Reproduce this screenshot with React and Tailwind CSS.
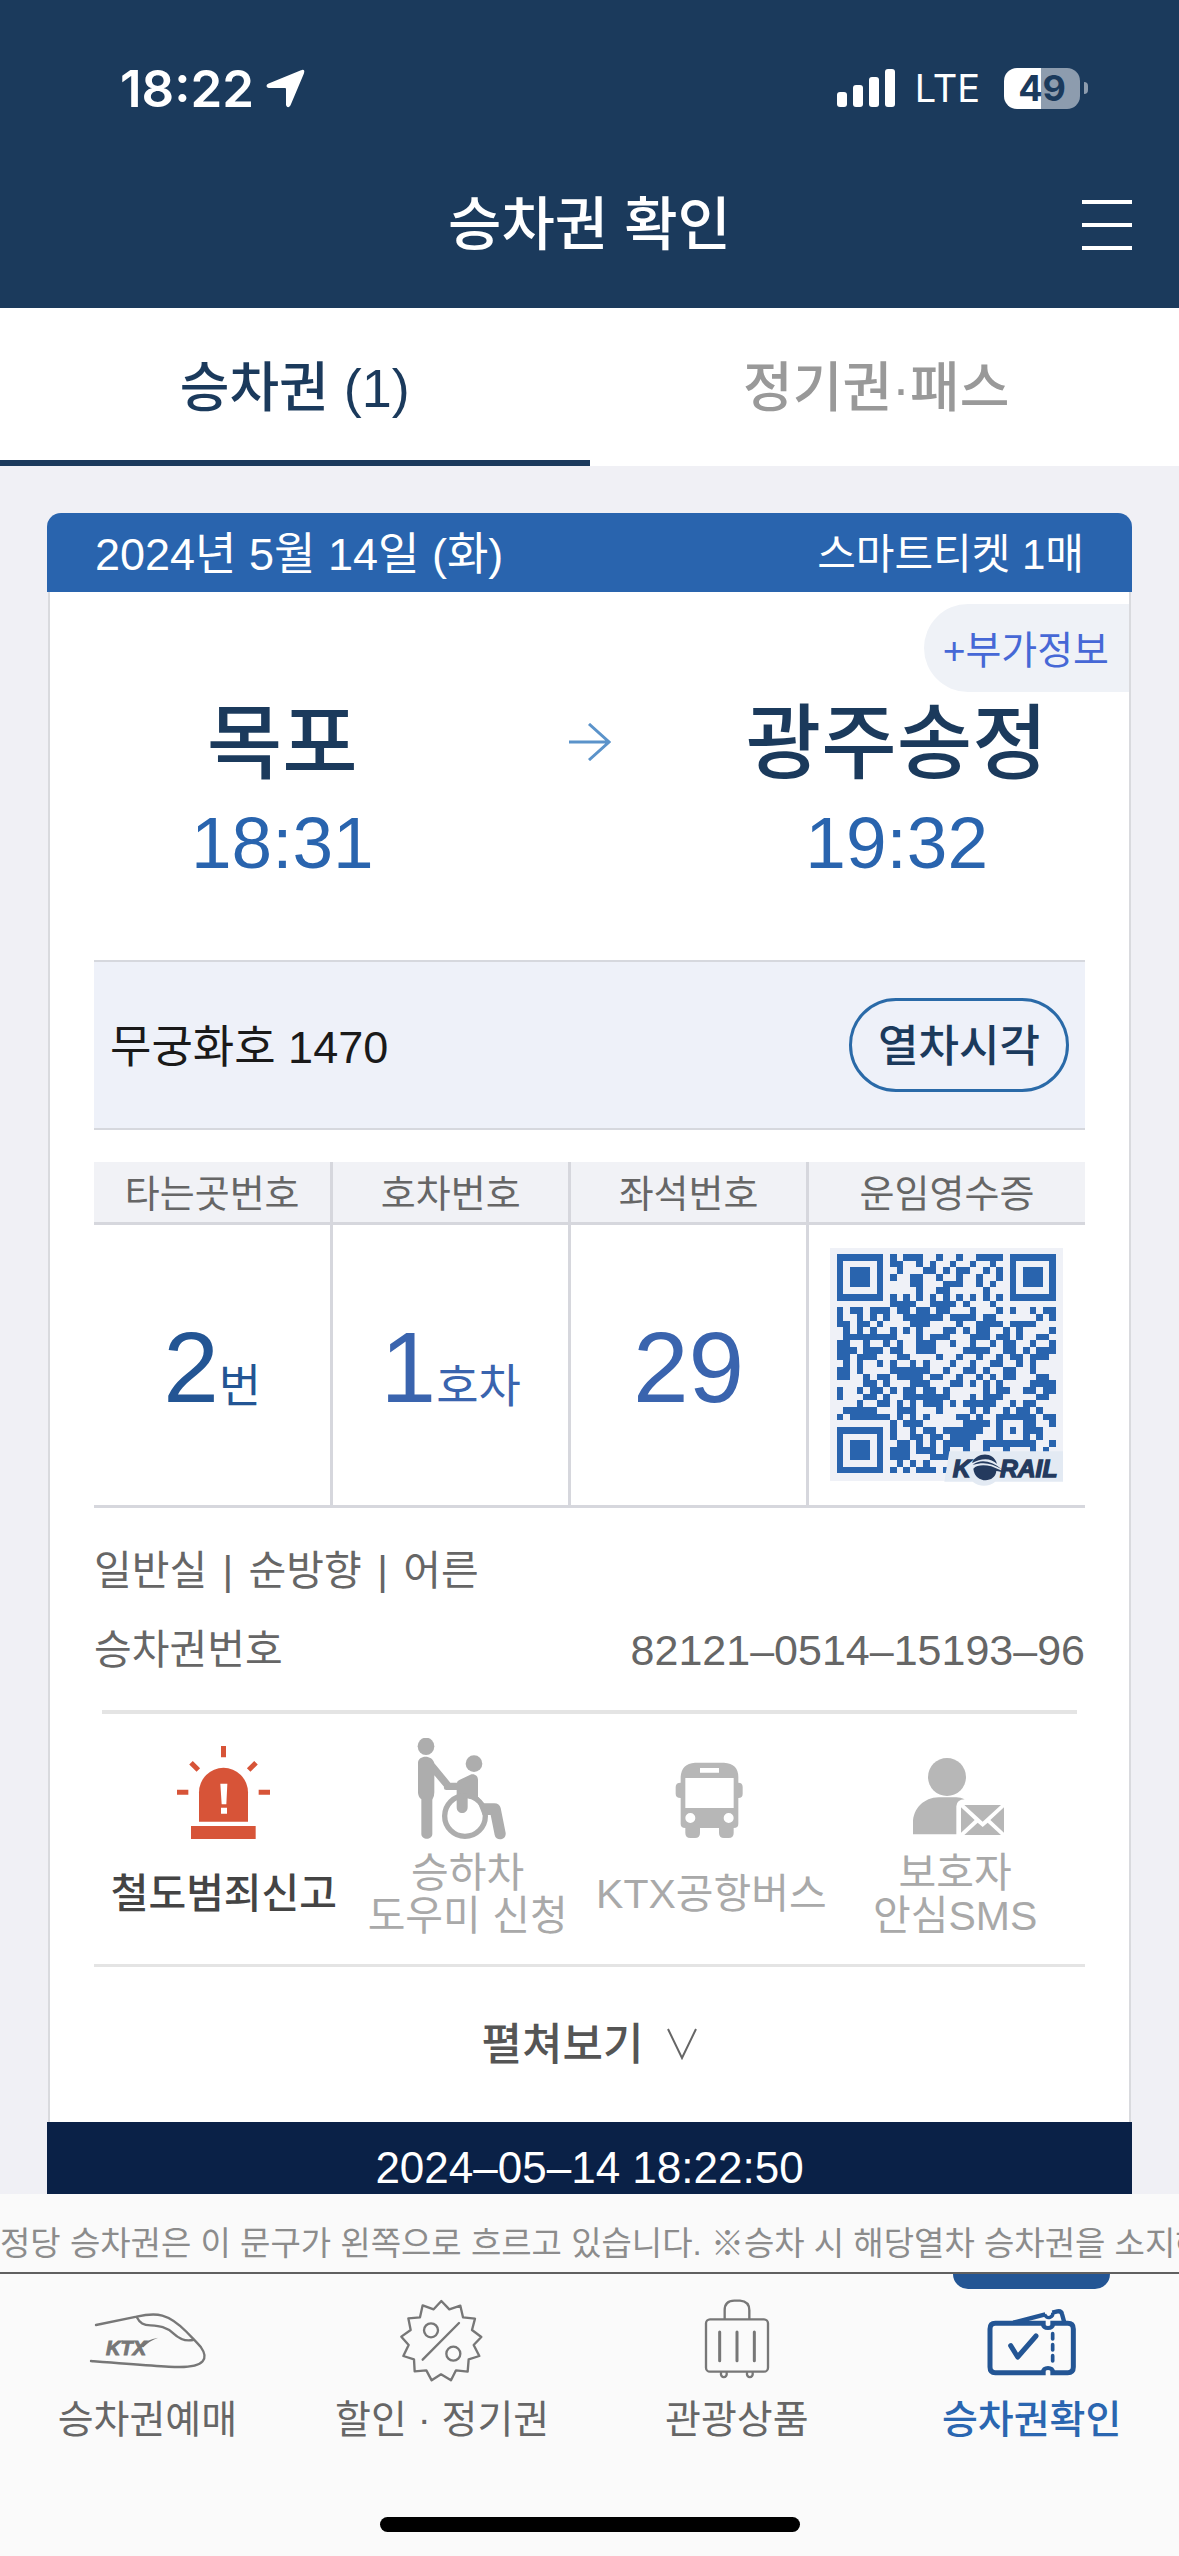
import React from "react";

const QR_ROWS = [
  "0-6 8 10-12 15 18 21-24 26-32",
  "0 6 8-9 12 14 17 20 23 26 32",
  "0 2-4 6 9 13-14 16 18-19 22 24 26 28-30 32",
  "0 2-4 6 8 11-12 15 18 21 24 26 28-30 32",
  "0 2-4 6 11-12 16-18 21 23 26 28-30 32",
  "0 6 12 15-16 22 26 32",
  "0-6 8 10 12 14 16 18 20 22 24 26-32",
  "8-11 14-17 19 23",
  "0 2-3 5-7 9-10 12-13 15-16 20 24 26 29 31-32",
  "0 3 5 7 10-15 17-20 22-23 30 32",
  "0-1 3-4 6 11-13 18 21-24 26-29",
  "1 3 5 8 10 12 16-17 19 21-22 25 27 32",
  "1-8 12 14-16 20-22 24-25 27 30-31",
  "0-1 4 7 9 12-14 17 20 23 25-26 29 32",
  "0-2 4-6 8-9 12-14 19-22 25-26 28 30-32",
  "0-1 3-5 9-10 15 18 21 24 26-27 29-31",
  "1 3 6 8 11 13 17 20 23-24 27 29",
  "0-1 3 8-13 16 19-20 22 25-26 29",
  "0-1 4 6-7 9-12 14-15 18 21 23 25-26 30-31",
  "4-5 7 11-13 17-18 20 22 24 29-32",
  "0 3 5-6 8 10-11 13-14 16 22 24-25 28-29 31-32",
  "0 4-5 7 10-16 20 22-24 30-31",
  "3 6-7 9 11 13-15 17 19-23 26 28-29",
  "1-5 9-11 15 20 22 25 27-28 30",
  "0 2-7 9 11 13 18-19 21 24-29 31-32",
  "8 10-12 19-22 24 28-29 32",
  "0-6 8 11 13-14 16-21 24 26 28-30",
  "0 6 8 11-12 14-15 17-20 24 28 30",
  "0 2-4 6 9-10 12 14 16-19 22-29 32",
  "0 2-4 6 8-10 12-14 16 19 22 25 29 31",
  "0 2-4 6 8-10 14-16",
  "0 6 9 11 13",
  "0-6 8 10 12-14 16",
];

const QR_PATH = QR_ROWS.map((row, y) =>
  row
    .split(" ")
    .map((run) => {
      const [a, b = a] = run.split("-").map(Number);
      return `M${a} ${y}h${b - a + 1}v1h-${b - a + 1}z`;
    })
    .join("")
).join("");

function QrCode() {
  return (
    <svg viewBox="30 30 699 699" className="mx-auto block w-[233px] overflow-visible" role="img" aria-label="운임영수증 QR">
      <rect x="30" y="30" width="699" height="699" fill="#eff1f7" />
      <path d={QR_PATH} fill="#2964ae" shapeRendering="crispEdges" transform="translate(50 48) scale(19.95)" />
      <path d="M388 640H729V731H526A53 53 0 0 1 458 731H373Z" fill="#e3eaf3" />
      <g fill="#243a5e">
        <g fontSize="74" fontWeight="700" fontStyle="italic" fontFamily="Liberation Sans" stroke="#243a5e" strokeWidth="4">
          <text x="398" y="717">K</text>
          <text x="540" y="717">RAIL</text>
        </g>
        <path d="M460 692C470 680 494 680 514 685L560 704C545 702 535 700 529 699C526 736 465 738 460 692Z" />
        <path d="M456 675C468 644 520 638 531 678C513 659 484 660 456 675Z" />
        <path d="M458 681C480 662 515 668 545 694C515 675 490 671 458 681Z" />
      </g>
    </svg>
  );
}

function SirenIcon() {
  return (
    <svg viewBox="249 57 360 306" className="h-[102px] w-[120px]" aria-hidden="true">
      <g fill="#d75438">
        <path d="M354 308V220a73 73 0 0 1 147 0V308Z" />
        <rect x="330" y="321" width="194" height="39" />
      </g>
      <path d="M427.500 81V115M288 220H322M533 220H567M330 131L352 153M525 131L503 153" stroke="#d75438" strokeWidth="15" />
      <path d="M418 194H439L436 256H422ZM420 266H438V284H420Z" fill="#fff" />
    </svg>
  );
}

function WheelchairIcon() {
  return (
    <svg viewBox="981 57 360 306" className="h-[102px] w-[120px]" aria-hidden="true">
      <g fill="#adadad">
        <ellipse cx="1035" cy="82" rx="25" ry="26" />
        <circle cx="1179" cy="134" r="25" />
        <path d="M1011 132C1011 108 1054 106 1060 133L1108 191H1128Q1128 187 1135 183L1168 167C1180 163 1191 170 1191 183V233L1208 253H1238Q1255 252 1259 267L1274 342C1276 364 1245 368 1241 348L1229 288H1205L1190 250Q1180 240 1160 237V264C1160 288 1127 288 1127 264V213H1096Q1087 213 1089 203L1060 169V220Q1060 234 1054 242V344C1054 364 1021 364 1021 344V241Q1011 234 1011 220Z" />
      </g>
      <circle cx="1152" cy="291" r="61" fill="none" stroke="#adadad" strokeWidth="16" />
    </svg>
  );
}

function BusIcon() {
  return (
    <svg viewBox="156 57 360 306" className="h-[102px] w-[120px]" aria-hidden="true">
      <path
        fill="#b7b7b7"
        fillRule="evenodd"
        d="M288 131H375Q418 134 418 174V191Q431 191 431 204V224Q431 237 418 237V314Q418 327 404 327V342Q404 357 389 357H375Q360 357 360 342V327H303V342Q303 357 288 357H274Q259 357 259 342V327Q245 327 245 314V237Q230 237 230 224V204Q230 191 245 191V174Q247 134 288 131ZM303 147V161H360V147ZM259 177V267H404V177ZM259 297a15 15 0 1 0 30 0a15 15 0 1 0 -30 0ZM374 297a15 15 0 1 0 30 0a15 15 0 1 0 -30 0Z"
      />
    </svg>
  );
}

function GuardianIcon() {
  return (
    <svg viewBox="888 57 360 306" className="h-[102px] w-[120px]" aria-hidden="true">
      <g fill="#b7b7b7">
        <circle cx="1044" cy="174" r="57" />
        <path d="M942 346V312C942 268 975 236 1019 235H1072Q1085 235 1097 241Q1073 242 1072 262V346Z" />
        <path d="M1096 258H1206L1151 308ZM1086 265L1127 303L1086 341ZM1215 265V341L1174 303ZM1096 348L1136 311L1151 324L1166 311L1206 348Z" />
      </g>
    </svg>
  );
}

function TrainIcon() {
  return (
    <svg viewBox="126 108 390 270" className="h-[90px] w-[130px]" aria-hidden="true">
      <g fill="none" stroke="#777" strokeWidth="7" strokeLinecap="round" strokeLinejoin="round">
        <path d="M168 195L290 170C350 156 385 160 440 216C455 232 470 246 483 262C505 293 497 322 415 321C380 321 330 317 153 303" />
        <path d="M290 171C300 190 310 196 332 196C360 198 378 200 400 220C418 237 434 245 459 240" />
      </g>
      <text x="198" y="285" fontSize="60" fontWeight="700" fontStyle="italic" fontFamily="Liberation Sans" fill="#777" stroke="#777" strokeWidth="3">KTX</text>
      <path d="M300 258Q320 238 355 233Q328 242 310 262Z" fill="#777" />
    </svg>
  );
}

function DiscountIcon() {
  return (
    <svg viewBox="1011 108 390 270" className="h-[90px] w-[130px]" aria-hidden="true">
      <g fill="none" stroke="#777" strokeWidth="7" strokeLinecap="round" strokeLinejoin="round">
        <path d="M1204 123L1228 148L1261 137L1269 172L1305 176L1296 210L1324 231L1301 255L1318 288L1286 298L1283 335L1248 331L1233 361L1203 343L1175 361L1159 331L1124 334L1122 298L1090 288L1106 255L1084 230L1112 210L1105 175L1140 172L1148 136L1181 148Z" />
        <path d="M1257 189L1148 299" />
        <circle cx="1173" cy="211" r="21" />
        <circle cx="1240" cy="281" r="21" />
      </g>
    </svg>
  );
}

function SuitcaseIcon() {
  return (
    <svg viewBox="96 108 390 270" className="h-[90px] w-[130px]" aria-hidden="true">
      <g fill="none" stroke="#777" strokeWidth="7" strokeLinecap="round">
        <rect x="198" y="178" width="186" height="157" rx="12" />
        <path d="M254 176V151Q254 122 283 122H300Q328 124 328 151V176" />
        <path d="M239 216V302M291 216V302M343 216V302" strokeWidth="9" />
        <path d="M243 338C240 356 263 356 260 338M321 338C318 356 341 356 338 338" />
      </g>
    </svg>
  );
}

function TicketIcon() {
  return (
    <svg viewBox="981 108 390 270" className="h-[90px] w-[130px]" aria-hidden="true">
      <g fill="none" stroke="#235594" strokeWidth="15">
        <path d="M1217 190H1066Q1050 190 1050 207V321Q1050 338 1066 338H1217" />
        <path d="M1231 190H1283Q1300 190 1300 207V321Q1300 338 1283 338H1231" />
        <path d="M1208 191Q1210 204 1224 204Q1238 204 1240 191M1208 337Q1210 324 1224 324Q1238 324 1240 337" strokeWidth="12" />
        <path d="M1120 188L1216 163M1237 158L1252 154Q1264 152 1266 162L1273 188" strokeWidth="13" />
        <path d="M1214 163Q1220 176 1230 172Q1241 168 1238 157" strokeWidth="10" />
        <path d="M1112 257L1133 291L1188 228" strokeLinecap="round" strokeLinejoin="round" />
        <path d="M1238 221V237M1238 254V270M1238 287V303" strokeWidth="11" strokeLinecap="round" />
      </g>
    </svg>
  );
}

function StatusBar() {
  return (
    <div className="flex items-center justify-between pt-[58px] pr-[91px] pb-6 pl-[120px]">
      <div className="flex h-[60px] items-center gap-3">
        <span className="font-['Inter'] text-[51px] leading-none font-semibold">18:22</span>
        <svg viewBox="0 0 39 39" className="size-[39px]" aria-hidden="true">
          <path d="M36 2Q38 1 37 4L23.500 36Q22 38.500 21 36V20Q21 18 19 18H3Q0 17 3 15.500Z" fill="#fff" stroke="#fff" strokeWidth="2" strokeLinejoin="round" />
        </svg>
      </div>
      <div className="flex h-[60px] items-center">
        <svg viewBox="0 0 58 38" className="h-[38px] w-[58px]" fill="#fff" aria-hidden="true">
          <rect x="0" y="23" width="10" height="15" rx="3" />
          <rect x="16" y="16" width="10" height="22" rx="3" />
          <rect x="32" y="8" width="10" height="30" rx="3" />
          <rect x="48" y="0" width="10" height="38" rx="3" />
        </svg>
        <span className="ml-5 font-['Inter'] text-[38px] leading-none">LTE</span>
        <span className="ml-6 flex h-[41px] w-[76px] items-center justify-center rounded-[13px] bg-linear-to-r from-white from-49% to-[#8d9cae] to-49% font-['Inter'] text-[36px] leading-none font-bold text-[#1b3a5c]">
          49
        </span>
        <span className="ml-1 h-3 w-1 rounded-r-full bg-[#8d9cae]" />
      </div>
    </div>
  );
}

const SERVICES = [
  { Icon: SirenIcon, lines: ["철도범죄신고"], tone: "font-medium text-[#444]" },
  { Icon: WheelchairIcon, lines: ["승하차", "도우미 신청"], tone: "text-[#a9a9a9]" },
  { Icon: BusIcon, lines: ["KTX공항버스"], tone: "text-[#a9a9a9]" },
  { Icon: GuardianIcon, lines: ["보호자", "안심SMS"], tone: "text-[#a9a9a9]" },
];

const NAV = [
  { Icon: TrainIcon, label: "승차권예매" },
  { Icon: DiscountIcon, label: "할인 · 정기권" },
  { Icon: SuitcaseIcon, label: "관광상품" },
  { Icon: TicketIcon, label: "승차권확인", active: true },
];

function Station({ name, time }) {
  return (
    <div className="w-[38%] text-center">
      <p className="text-[82px] leading-[104px] font-medium text-[#1b3a5c]">{name}</p>
      <p className="text-[73px] leading-[94px] text-[#2964ae]">{time}</p>
    </div>
  );
}

function TicketCard() {
  return (
    <section className="mx-[47px]">
      <div className="flex h-[79px] items-center justify-between rounded-t-[14px] bg-[#2964ae] px-12 pt-1 text-white">
        <h2 className="text-[45px] leading-none">2024년 5월 14일 (화)</h2>
        <p className="text-[42px] leading-none">스마트티켓 1매</p>
      </div>
      <div className="mx-px border-x-2 border-[#d9dade] bg-white pt-3">
        <button className="ml-auto block h-[88px] rounded-l-full bg-[#eff2f7] pt-1 pr-5 pl-[19px] text-[39px] leading-none text-[#4668d6]">
          +부가정보
        </button>
        <div className="mx-11">
          <div className="flex justify-between pb-[70px]">
            <Station name="목포" time="18:31" />
            <svg viewBox="0 0 42 38" className="mt-[31px] h-[38px] w-[42px]" fill="none" stroke="#5b93ca" strokeWidth="3" aria-hidden="true">
              <path d="M0 19H40M20 1L40 19L20 37" />
            </svg>
            <Station name="광주송정" time="19:32" />
          </div>
          <div className="flex items-center justify-between border-y-2 border-[#d6d8de] bg-[#eef1f9] py-9 pr-4 pl-4">
            <p className="pt-1 text-[45px] leading-none text-[#1a1a1a]">무궁화호 1470</p>
            <button className="h-[94px] rounded-full border-3 border-[#2a6aa8] px-[26px] pt-1 text-[44px] leading-none font-medium text-[#1b3a5c]">
              열차시각
            </button>
          </div>
          <table className="mt-8 w-full table-fixed border-collapse text-center">
            <thead>
              <tr className="h-[61px] border-b-3 border-[#d6d7dd] bg-[#f1f2f6] text-[38px] leading-none text-[#666]">
                <th className="w-[24%] border-r-3 border-[#d6d7dd] p-0 pt-1 font-normal">타는곳번호</th>
                <th className="w-[24%] border-r-3 border-[#d6d7dd] p-0 pt-1 font-normal">호차번호</th>
                <th className="w-[24%] border-r-3 border-[#d6d7dd] p-0 pt-1 font-normal">좌석번호</th>
                <th className="w-[28%] p-0 pt-1 font-normal">운임영수증</th>
              </tr>
            </thead>
            <tbody>
              <tr className="h-[283px] border-b-3 border-[#d6d7dd] text-[100px] leading-none text-[#3a64ae]">
                <td className="border-r-3 border-[#d6d7dd] p-0 pt-1 text-[#235594]">
                  2<span className="text-[46px]">번</span>
                </td>
                <td className="border-r-3 border-[#d6d7dd] p-0 pt-1">
                  1<span className="text-[46px]">호차</span>
                </td>
                <td className="border-r-3 border-[#d6d7dd] p-0 pt-1">29</td>
                <td className="p-0">
                  <QrCode />
                </td>
              </tr>
            </tbody>
          </table>
          <div className="mt-6 text-[41px] leading-[79px] text-[#666]">
            <p>
              일반실 <span className="mx-1">|</span> 순방향 <span className="mx-1">|</span> 어른
            </p>
            <p className="flex justify-between">
              <span>승차권번호</span>
              <span className="text-[43px]">82121–0514–15193–96</span>
            </p>
          </div>
          <div className="mx-2 mt-5 grid grid-cols-4 border-t-4 border-[#e4e4e4] pt-6 pb-[26px]">
            {SERVICES.map(({ Icon, lines, tone }) => (
              <button key={lines[0]} className={`flex flex-col items-center ${tone}`}>
                <Icon />
                <span className="mt-3 flex h-[86px] flex-col justify-center text-[41px] leading-[43px] whitespace-nowrap">
                  {lines.map((line) => (
                    <span key={line}>{line}</span>
                  ))}
                </span>
              </button>
            ))}
          </div>
          <button className="flex w-full items-center justify-center gap-6 border-t-3 border-[#e4e4e4] py-14 text-[44px] leading-[43px] font-medium text-[#555]">
            펼쳐보기
            <svg viewBox="0 0 30 32" className="h-8 w-[30px]" fill="none" stroke="#666" strokeWidth="2" aria-hidden="true">
              <path d="M1 1L15 30L29 1" />
            </svg>
          </button>
        </div>
      </div>
      <p className="bg-[#0a2147] pt-6 pb-1 text-center text-[44px] leading-[44px] text-white">2024–05–14 18:22:50</p>
    </section>
  );
}

export default function App() {
  return (
    <div className="flex min-h-screen flex-col bg-[#f0f0f5] font-['Liberation_Sans','Noto_Sans_CJK_KR',sans-serif]">
      <header className="bg-[#1b3a5c] text-white">
        <StatusBar />
        <div className="grid h-[166px] grid-cols-[1fr_auto_1fr] items-center px-[47px]">
          <h1 className="col-start-2 text-[58px] leading-none font-medium">승차권 확인</h1>
          <button className="justify-self-end" aria-label="메뉴">
            <svg viewBox="0 0 50 50" className="size-[50px]" stroke="#fff" strokeWidth="4" aria-hidden="true">
              <path d="M0 2H50M0 25H50M0 48H50" />
            </svg>
          </button>
        </div>
      </header>
      <nav className="grid grid-cols-2 bg-white text-[54px] leading-none font-medium">
        <button className="h-[158px] border-b-6 border-[#1b3a5c] pt-2 text-[#1b3a5c]">승차권 (1)</button>
        <button className="h-[158px] border-b-6 border-white pt-2 pr-4 text-[#999]">정기권·패스</button>
      </nav>
      <main className="flex-1 pt-[47px]">
        <TicketCard />
      </main>
      <footer className="bg-[#fafafa]">
        <p className="overflow-hidden border-b-2 border-[#606060] pt-[22px] text-[33px] leading-[56px] text-clip whitespace-nowrap text-[#8c8c8c]">
          정당 승차권은 이 문구가 왼쪽으로 흐르고 있습니다. ※승차 시 해당열차 승차권을 소지해
        </p>
        <nav className="grid grid-cols-4">
          {NAV.map(({ Icon, label, active }) => (
            <a
              key={label}
              href="#"
              className={`relative flex flex-col items-center pt-[22px] text-[39px] leading-[48px] ${active ? "font-medium text-[#2a66b0]" : "text-[#666]"}`}
            >
              {active && <span className="absolute top-0 h-[15px] w-[157px] rounded-b-[15px] bg-[#235594]" />}
              <Icon />
              <span className="mt-[10px]">{label}</span>
            </a>
          ))}
        </nav>
        <div className="mx-auto mt-[73px] mb-6 h-[15px] w-[420px] rounded-full bg-black" />
      </footer>
    </div>
  );
}
